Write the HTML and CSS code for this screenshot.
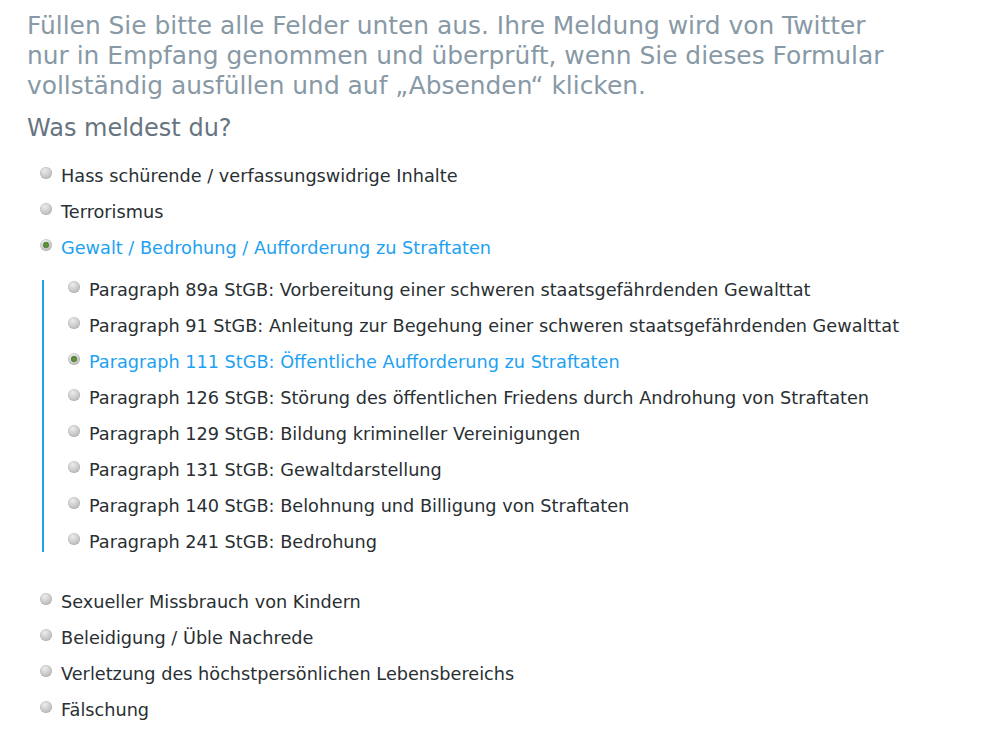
FILE: index.html
```html
<!DOCTYPE html>
<html lang="de">
<head>
<meta charset="utf-8">
<title>Meldung</title>
<link rel="stylesheet" href="styles.css">
</head>
<body>
<div class="page">
  <p class="intro">Füllen Sie bitte alle Felder unten aus. Ihre Meldung wird von Twitter nur in Empfang genommen und überprüft, wenn Sie dieses Formular vollständig ausfüllen und auf „Absenden“ klicken.</p>
  <h2 class="question">Was meldest du?</h2>
  <ul class="options">
    <li class="option"><span class="radio"></span><span>Hass schürende / verfassungswidrige Inhalte</span></li>
    <li class="option"><span class="radio"></span><span>Terrorismus</span></li>
    <li class="option selected"><span class="radio checked"></span><span>Gewalt / Bedrohung / Aufforderung zu Straftaten</span></li>
    <li class="sub-wrap">
      <ul class="sub-options">
        <li class="option"><span class="radio"></span><span>Paragraph 89a StGB: Vorbereitung einer schweren staatsgefährdenden Gewalttat</span></li>
        <li class="option"><span class="radio"></span><span>Paragraph 91 StGB: Anleitung zur Begehung einer schweren staatsgefährdenden Gewalttat</span></li>
        <li class="option selected"><span class="radio checked"></span><span>Paragraph 111 StGB: Öffentliche Aufforderung zu Straftaten</span></li>
        <li class="option"><span class="radio"></span><span>Paragraph 126 StGB: Störung des öffentlichen Friedens durch Androhung von Straftaten</span></li>
        <li class="option"><span class="radio"></span><span>Paragraph 129 StGB: Bildung krimineller Vereinigungen</span></li>
        <li class="option"><span class="radio"></span><span>Paragraph 131 StGB: Gewaltdarstellung</span></li>
        <li class="option"><span class="radio"></span><span>Paragraph 140 StGB: Belohnung und Billigung von Straftaten</span></li>
        <li class="option"><span class="radio"></span><span>Paragraph 241 StGB: Bedrohung</span></li>
      </ul>
    </li>
    <li class="option"><span class="radio"></span><span>Sexueller Missbrauch von Kindern</span></li>
    <li class="option"><span class="radio"></span><span>Beleidigung / Üble Nachrede</span></li>
    <li class="option"><span class="radio"></span><span>Verletzung des höchstpersönlichen Lebensbereichs</span></li>
    <li class="option"><span class="radio"></span><span>Fälschung</span></li>
  </ul>
</div>
</body>
</html>
```
FILE: styles.css
```css
html, body {
  margin: 0;
  padding: 0;
  background: #ffffff;
}
body {
  font-family: "DejaVu Sans", "Noto Sans", sans-serif;
  color: #292f33;
}
.page {
  padding: 11px 20px 0 27px;
}
.intro {
  margin: 0;
  width: 862px;
  font-size: 24.9px;
  line-height: 30px;
  color: #8899a6;
}
.question {
  margin: 12px 0 0 0;
  font-size: 24px;
  line-height: 30px;
  font-weight: normal;
  color: #66757f;
}
.options, .sub-options {
  list-style: none;
  margin: 0;
  padding: 0;
}
.options {
  margin-top: 23px;
  padding-left: 13px;
}
.option {
  display: flex;
  align-items: flex-start;
  gap: 9px;
  font-size: 17.7px;
  line-height: 20px;
}
.options > li + li {
  margin-top: 16px;
}
.sub-options > li + li {
  margin-top: 16px;
}
.sub-wrap {
  margin-top: 22px !important;
  padding-bottom: 24px;
}
.sub-options {
  margin-left: 2px;
  border-left: 2px solid #1da1f2;
  padding-left: 24px;
}
.selected {
  color: #1da1f2;
}
.radio {
  flex: none;
  width: 12px;
  height: 12px;
  margin-top: 1px;
  border-radius: 50%;
  box-sizing: border-box;
  background: radial-gradient(circle at 40% 30%, #ececec 0%, #cfcfcf 45%, #a9a9a9 100%);
  box-shadow: inset 0 0 0 0.5px rgba(0,0,0,0.12);
}
.radio.checked {
  background:
    radial-gradient(circle at 50% 50%, #6a9f3c 0, #4f8a2a 2.2px, #7d8a76 3px, transparent 3.6px),
    radial-gradient(circle at 40% 30%, #f0f0f0 0%, #d2d2d2 45%, #a9a9a9 100%);
}
```
